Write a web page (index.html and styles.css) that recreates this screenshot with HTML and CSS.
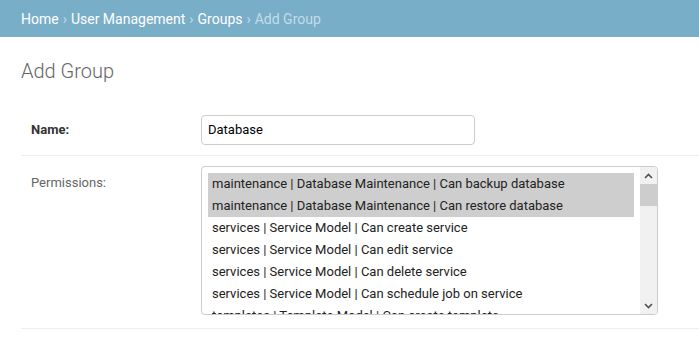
FILE: index.html
```html
<!DOCTYPE html>
<html lang="en">
<head>
<meta charset="utf-8">
<title>Add Group</title>
<link rel="stylesheet" href="styles.css">
</head>
<body>
<nav class="breadcrumbs">
  <a href="#">Home</a><span class="sep">›</span><a href="#">User Management</a><span class="sep">›</span><a href="#">Groups</a><span class="sep">›</span><span class="current">Add Group</span>
</nav>
<main class="content">
  <h1 class="title">Add Group</h1>
  <div class="form-row">
    <label class="label required label-name">Name:</label>
    <div class="text-input">Database</div>
  </div>
  <div class="form-row">
    <label class="label label-perm">Permissions:</label>
    <div class="multi-select">
      <ul class="options">
        <li class="option selected">maintenance | Database Maintenance | Can backup database</li>
        <li class="option selected">maintenance | Database Maintenance | Can restore database</li>
        <li class="option">services | Service Model | Can create service</li>
        <li class="option">services | Service Model | Can edit service</li>
        <li class="option">services | Service Model | Can delete service</li>
        <li class="option">services | Service Model | Can schedule job on service</li>
        <li class="option">templates | Template Model | Can create template</li>
      </ul>
      <div class="scrollbar">
        <div class="arrow"><svg width="9" height="6" viewBox="0 0 9 6"><path d="M1 5 L4.5 1.5 L8 5" fill="none" stroke="#505050" stroke-width="1.6"/></svg></div>
        <div class="track"><div class="thumb"></div></div>
        <div class="arrow"><svg width="9" height="6" viewBox="0 0 9 6"><path d="M1 1 L4.5 4.5 L8 1" fill="none" stroke="#505050" stroke-width="1.6"/></svg></div>
      </div>
    </div>
  </div>
</main>
</body>
</html>
```
FILE: styles.css
```css
* { box-sizing: border-box; }
html, body { margin: 0; padding: 0; background: #fff; }
body {
  font-family: Roboto, "Liberation Sans", sans-serif;
  font-size: 13px;
  color: #333;
}
.breadcrumbs {
  height: 37px;
  background: #79aec8;
  display: flex;
  align-items: center;
  padding: 0 21px;
  font-size: 14px;
  color: #c4dce8;
}
.breadcrumbs a { color: #fff; text-decoration: none; }
.breadcrumbs .sep { padding: 0 4px; }
.content { padding: 22px 0 0 21px; }
.title {
  margin: 0 0 22px;
  font-size: 20px;
  line-height: 24px;
  font-weight: 300;
  color: #666;
}
.form-row {
  display: flex;
  align-items: flex-start;
  padding: 10px;
  border-bottom: 1px solid #eee;
}
.label {
  flex: 0 0 170px;
  padding-right: 10px;
  line-height: 16px;
  color: #666;
}
.label.required { color: #333; font-weight: bold; }
.label-name { padding-top: 7px; }
.label-perm { padding-top: 9px; }
.text-input {
  width: 274px;
  height: 30px;
  border: 1px solid #ccc;
  border-radius: 4px;
  padding: 0 6px;
  line-height: 28px;
  color: #000;
}
.multi-select {
  width: 457px;
  height: 149px;
  border: 1px solid #ccc;
  border-radius: 4px;
  display: flex;
  overflow: hidden;
  margin-bottom: 3px;
}
.options {
  list-style: none;
  margin: 0;
  padding: 6px 6px 0 6px;
  flex: 1;
  overflow: hidden;
}
.option {
  height: 22px;
  line-height: 22px;
  padding-left: 4px;
  white-space: nowrap;
  color: #222;
}
.option.selected { background: #cecece; }
.scrollbar {
  flex: 0 0 17px;
  background: #f1f1f1;
  display: flex;
  flex-direction: column;
}
.arrow {
  height: 17px;
  display: flex;
  align-items: center;
  justify-content: center;
}
.track { flex: 1; }
.thumb { height: 22px; background: #cdcdcd; }
```
